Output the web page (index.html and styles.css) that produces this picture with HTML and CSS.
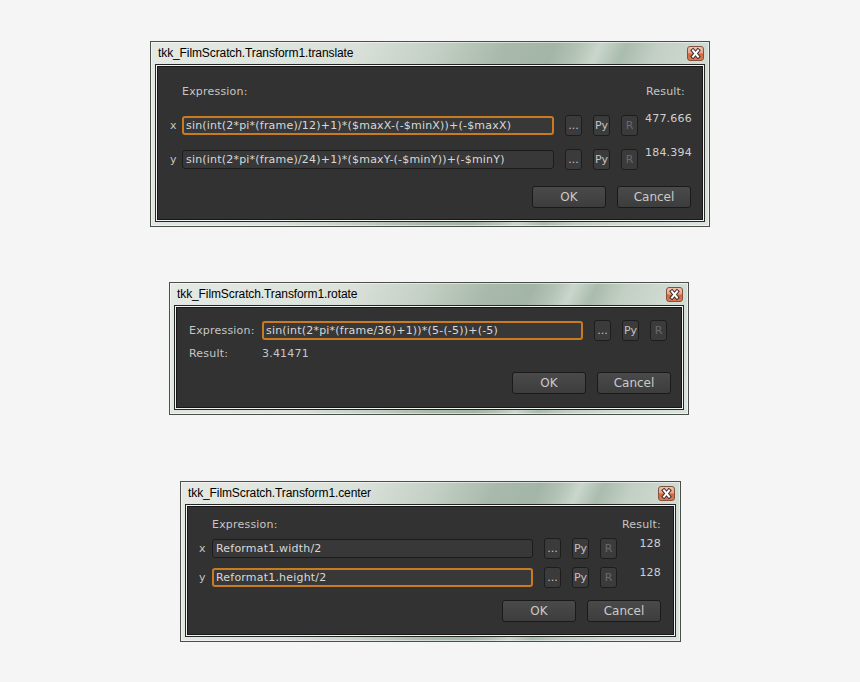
FILE: index.html
```html
<!DOCTYPE html>
<html lang="en">
<head>
    <meta charset="UTF-8">
    <title>Expression dialogs</title>
    <link rel="stylesheet" href="styles.css">
</head>
<body>
    <!-- translate: two channels -->
    <div class="window win-translate">
        <div class="titlebar">
            <span class="title">tkk_FilmScratch.Transform1.translate</span>
            <span class="close-btn">
                <svg width="15" height="13" viewBox="0 0 15 13">
                    <path d="M5 3.5 L10 9.5 M10 3.5 L5 9.5" stroke="#3a2a2a" stroke-width="4" stroke-linecap="square"/>
                    <path d="M5 3.5 L10 9.5 M10 3.5 L5 9.5" stroke="#fff" stroke-width="2" stroke-linecap="square"/>
                </svg>
            </span>
        </div>
        <div class="frame">
            <div class="panel">
                <div class="head">
                    <span class="caption">Expression:</span>
                    <span class="result-head">Result:</span>
                </div>
                <div class="row row-first">
                    <span class="axis">x</span>
                    <input class="field focused" type="text" value="sin(int(2*pi*(frame)/12)+1)*($maxX-(-$minX))+(-$maxX)">
                    <button class="mini">...</button>
                    <button class="mini">Py</button>
                    <button class="mini off">R</button>
                    <span class="result">477.666</span>
                </div>
                <div class="row row-second">
                    <span class="axis">y</span>
                    <input class="field" type="text" value="sin(int(2*pi*(frame)/24)+1)*($maxY-(-$minY))+(-$minY)">
                    <button class="mini">...</button>
                    <button class="mini">Py</button>
                    <button class="mini off">R</button>
                    <span class="result">184.394</span>
                </div>
                <div class="actions">
                    <button class="btn">OK</button>
                    <button class="btn">Cancel</button>
                </div>
            </div>
        </div>
    </div>

    <!-- rotate: single value -->
    <div class="window win-rotate">
        <div class="titlebar">
            <span class="title">tkk_FilmScratch.Transform1.rotate</span>
            <span class="close-btn">
                <svg width="15" height="13" viewBox="0 0 15 13">
                    <path d="M5 3.5 L10 9.5 M10 3.5 L5 9.5" stroke="#3a2a2a" stroke-width="4" stroke-linecap="square"/>
                    <path d="M5 3.5 L10 9.5 M10 3.5 L5 9.5" stroke="#fff" stroke-width="2" stroke-linecap="square"/>
                </svg>
            </span>
        </div>
        <div class="frame">
            <div class="panel">
                <div class="row">
                    <span class="label">Expression:</span>
                    <input class="field focused" type="text" value="sin(int(2*pi*(frame/36)+1))*(5-(-5))+(-5)">
                    <button class="mini">...</button>
                    <button class="mini">Py</button>
                    <button class="mini off">R</button>
                </div>
                <div class="result-line">
                    <span class="label">Result:</span>
                    <span>3.41471</span>
                </div>
                <div class="actions">
                    <button class="btn">OK</button>
                    <button class="btn">Cancel</button>
                </div>
            </div>
        </div>
    </div>

    <!-- center: two channels -->
    <div class="window win-center">
        <div class="titlebar">
            <span class="title">tkk_FilmScratch.Transform1.center</span>
            <span class="close-btn">
                <svg width="15" height="13" viewBox="0 0 15 13">
                    <path d="M5 3.5 L10 9.5 M10 3.5 L5 9.5" stroke="#3a2a2a" stroke-width="4" stroke-linecap="square"/>
                    <path d="M5 3.5 L10 9.5 M10 3.5 L5 9.5" stroke="#fff" stroke-width="2" stroke-linecap="square"/>
                </svg>
            </span>
        </div>
        <div class="frame">
            <div class="panel">
                <div class="head">
                    <span class="caption">Expression:</span>
                    <span class="result-head">Result:</span>
                </div>
                <div class="row row-first">
                    <span class="axis">x</span>
                    <input class="field" type="text" value="Reformat1.width/2">
                    <button class="mini">...</button>
                    <button class="mini">Py</button>
                    <button class="mini off">R</button>
                    <span class="result">128</span>
                </div>
                <div class="row row-second">
                    <span class="axis">y</span>
                    <input class="field focused" type="text" value="Reformat1.height/2">
                    <button class="mini">...</button>
                    <button class="mini">Py</button>
                    <button class="mini off">R</button>
                    <span class="result">128</span>
                </div>
                <div class="actions">
                    <button class="btn">OK</button>
                    <button class="btn">Cancel</button>
                </div>
            </div>
        </div>
    </div>
</body>
</html>
```

FILE: styles.css
```css
body, html {
    margin: 0;
    padding: 0;
    background-color: #f5f5f5;
    font-family: 'DejaVu Sans', Verdana, sans-serif;
    font-size: 11px;
    letter-spacing: 0.2px;
}

/* window chrome */
.window {
    box-sizing: border-box;
    border: 1px solid #4a4f4a;
    background: linear-gradient(115deg, #e4e9e4 0%, #dae1da 32%, #c3cfc4 45%, #a9baac 55%, #a2b5a6 63%, #b4c4b6 67%, #cad6cc 70%, #a9bcad 74%, #c2cfc4 79%, #d0dbd2 87%, #dae3dc 100%);
    box-shadow: inset 0 0 0 1px rgba(255, 255, 255, 0.5);
}
.win-translate {
    width: 560px;
    margin: 41px 0 0 150px;
}
.win-rotate {
    width: 520px;
    margin: 55px 0 0 169px;
}
.win-center {
    width: 501px;
    margin: 66px 0 0 180px;
}
.titlebar {
    display: flex;
    align-items: center;
    justify-content: space-between;
    height: 22px;
    padding: 0 5px 0 7px;
}
.title {
    font-family: 'Liberation Sans', Arial, sans-serif;
    font-size: 12px;
    letter-spacing: -0.1px;
    color: #000;
}
.close-btn {
    display: flex;
    align-items: center;
    justify-content: center;
    box-sizing: border-box;
    width: 17px;
    height: 15px;
    border: 1px solid #82503f;
    border-radius: 3px;
    background: linear-gradient(#f2c2ae 0%, #e8a68b 42%, #d6673f 56%, #dc7a52 100%);
}
.frame {
    padding: 2px 6px 6px 6px;
}
.panel {
    background-color: #323232;
    border: 1px solid #161616;
    box-shadow: 0 0 0 1px #f2f2f2, 0 0 0 2px #262626;
    color: #c6c6c6;
}

/* rows */
.head {
    display: flex;
    line-height: 14px;
}
.row {
    display: flex;
    align-items: center;
    height: 21px;
}
.axis {
    flex: none;
    line-height: 14px;
}
.label {
    flex: none;
}
.field {
    flex: none;
    box-sizing: border-box;
    height: 19px;
    margin: 0;
    padding: 0 3px;
    border: 1px solid #1c1c1c;
    border-radius: 3px;
    background-color: #383838;
    color: #d8d8d8;
    font: inherit;
    letter-spacing: inherit;
    outline: none;
}
.field.focused {
    border: 2px solid #c97b22;
    padding: 0 2px;
}
.mini {
    flex: none;
    box-sizing: border-box;
    width: 17px;
    height: 21px;
    margin: 0 0 0 11px;
    padding: 0;
    border: 1px solid #1d1d1d;
    border-radius: 3px;
    background-color: #3b3b3b;
    color: #c4c4c4;
    font: inherit;
    letter-spacing: 0;
}
.mini.off {
    color: #6a6a6a;
}
.result {
    align-self: flex-start;
    line-height: 14px;
    color: #d0d0d0;
}
.actions {
    display: flex;
    justify-content: flex-end;
    gap: 11px;
}
.btn {
    box-sizing: border-box;
    width: 74px;
    height: 22px;
    padding: 0;
    border: 1px solid #1a1a1a;
    border-radius: 3px;
    background: linear-gradient(#4a4a4a, #3d3d3d);
    color: #cacaca;
    font: inherit;
    font-size: 12px;
}

/* translate */
.win-translate .panel {
    padding: 18px 0 11px 12px;
}
.win-translate .head {
    padding-left: 12px;
}
.win-translate .result-head {
    margin-left: auto;
    margin-right: 17px;
}
.win-translate .axis {
    width: 12px;
}
.win-translate .field {
    width: 372px;
}
.win-translate .row-first {
    margin-top: 16px;
}
.win-translate .row-second {
    margin-top: 13px;
}
.win-translate .result {
    margin: -3px 0 0 7px;
}
.win-translate .actions {
    margin-top: 16px;
    padding-right: 11px;
}

/* rotate */
.win-rotate .panel {
    padding: 12px 0 13px 12px;
}
.win-rotate .row .label {
    width: 73px;
}
.win-rotate .field {
    width: 321px;
}
.result-line {
    display: flex;
    margin-top: 6px;
    line-height: 14px;
}
.result-line .label {
    width: 73px;
}
.win-rotate .actions {
    margin-top: 11px;
    padding-right: 10px;
}

/* center */
.win-center .panel {
    padding: 11px 0 12px 11px;
}
.win-center .head {
    padding-left: 13px;
}
.win-center .result-head {
    margin-left: auto;
    margin-right: 12px;
}
.win-center .axis {
    width: 13px;
}
.win-center .field {
    width: 321px;
}
.win-center .row-first {
    margin-top: 6px;
}
.win-center .row-second {
    margin-top: 8px;
}
.win-center .result {
    flex: 1;
    margin-top: -1px;
    padding-right: 12px;
    text-align: right;
}
.win-center .actions {
    margin-top: 12px;
    padding-right: 12px;
}
```
